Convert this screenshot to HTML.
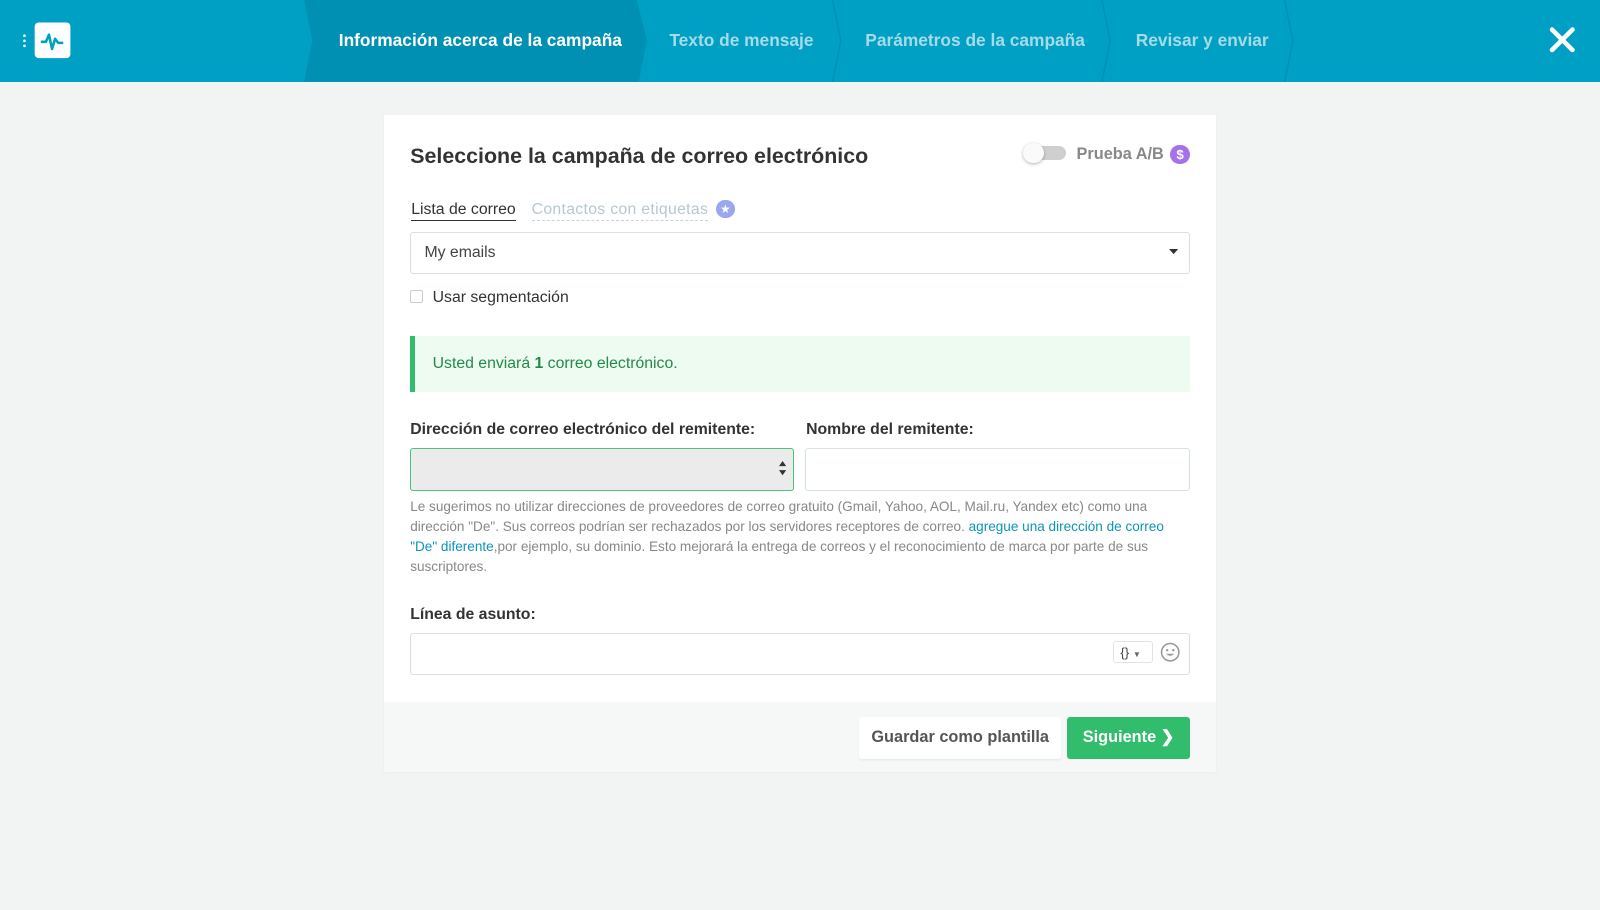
<!DOCTYPE html>
<html><head><meta charset="utf-8"><style>
html,body{margin:0;padding:0;}
body{width:1600px;height:910px;background:#f2f4f4;overflow:hidden;font-family:"Liberation Sans",sans-serif;}
#w{zoom:1.0204;width:1568px;height:892px;position:relative;}
.a{position:absolute;}
.hdr{left:0;top:0;width:1568px;height:80px;background:#00a0c5;}
.tab{top:0;height:80px;line-height:80px;font-size:17px;font-weight:bold;color:#a6dbe8;}
.card{left:376px;top:113px;width:816px;height:644px;background:#fff;box-shadow:0 1px 2px rgba(0,0,0,.05);}
.lbl{font-size:15px;font-weight:bold;color:#333;}
.inp{border:1px solid #d6e2e2;border-radius:3px;background:#fff;}
</style></head><body><div id="w">
<div class="a hdr"></div>
<svg class="a" style="left:0;top:0" width="1568" height="80">
<polygon points="298,0 624,0 634,40 626,80 298,80 306,40" fill="#0090b3"/>
<polyline points="816,0 824,40 816,80" fill="none" stroke="#0090b3" stroke-width="1.5"/>
<polyline points="1080,0 1088,40 1080,80" fill="none" stroke="#0090b3" stroke-width="1.5"/>
<polyline points="1259,0 1267,40 1259,80" fill="none" stroke="#0090b3" stroke-width="1.5"/>
<circle cx="24" cy="35" r="1.3" fill="#fff"/><circle cx="24" cy="40" r="1.3" fill="#fff"/><circle cx="24" cy="45" r="1.3" fill="#fff"/>
<rect x="34" y="22" width="35" height="35" rx="4" fill="#fff"/>
<polyline points="40,41 45,41 48,34 51,48 54,38 57,42 62,42" fill="none" stroke="#00a0c5" stroke-width="2.5" stroke-linejoin="round"/>
<path d="M1521 29 L1541 49 M1541 29 L1521 49" stroke="#fff" stroke-width="4.5" stroke-linecap="round"/>
</svg>
<div class="a tab" style="left:332px;color:#fff">Información acerca de la campaña</div>
<div class="a tab" style="left:656px">Texto de mensaje</div>
<div class="a tab" style="left:848px">Parámetros de la campaña</div>
<div class="a tab" style="left:1113px">Revisar y enviar</div>

<div class="a card"></div>
<div class="a" style="left:376px;top:688px;width:816px;height:69px;background:#f6f8f8"></div>
<div class="a" style="left:402px;top:141px;font-size:21px;font-weight:bold;color:#333">Seleccione la campaña de correo electrónico</div>
<div class="a" style="left:1005px;top:143px;width:40px;height:14px;border-radius:7px;background:#cfcfcf"></div>
<div class="a" style="left:1003px;top:140px;width:20px;height:20px;border-radius:10px;background:#fafafa;box-shadow:0 1px 3px rgba(0,0,0,.3)"></div>
<div class="a" style="left:1055px;top:142px;font-size:16px;font-weight:bold;color:#888">Prueba A/B</div>
<div class="a" style="left:1147px;top:142px;width:19px;height:19px;border-radius:10px;background:#a571e8;color:#fff;font-size:13px;font-weight:bold;text-align:center;line-height:19px">$</div>

<div class="a" style="left:403px;top:197px;font-size:15.5px;color:#333;border-bottom:1px solid #333;padding-bottom:1px">Lista de correo</div>
<div class="a" style="left:521px;top:197px;font-size:15.5px;color:#b8c8d0;border-bottom:1px dashed #c8d4da;padding-bottom:1px;letter-spacing:0.3px">Contactos con etiquetas</div>
<div class="a" style="left:702px;top:196px;width:18px;height:18px;border-radius:9px;background:#9aa6f0;color:#fff;font-size:12px;text-align:center;line-height:18px">★</div>

<div class="a inp" style="left:402px;top:227px;width:762px;height:40px"></div>
<div class="a" style="left:416px;top:239px;font-size:15.5px;color:#444">My emails</div>
<svg class="a" style="left:1146px;top:244px" width="10" height="6"><polygon points="0,0 9,0 4.5,5" fill="#333"/></svg>

<div class="a" style="left:402px;top:284px;width:11px;height:11px;border:1px solid #ccc;border-radius:2px;background:#fff"></div>
<div class="a" style="left:424px;top:283px;font-size:15.5px;color:#333">Usar segmentación</div>

<div class="a" style="left:402px;top:329px;width:764px;height:55px;background:#edfbf1;border-left:5px solid #31bd6c;box-sizing:border-box"></div>
<div class="a" style="left:424px;top:348px;font-size:15.5px;color:#238a4c">Usted enviará <b>1</b> correo electrónico.</div>

<div class="a lbl" style="left:402px;top:413px;font-size:15.5px">Dirección de correo electrónico del remitente:</div>
<div class="a lbl" style="left:790px;top:413px;font-size:15.5px">Nombre del remitente:</div>
<div class="a" style="left:402px;top:439px;width:374px;height:40px;background:#ebebeb;border:1px solid #4cc37b;border-radius:3px"></div>
<svg class="a" style="left:762px;top:452px" width="9" height="14"><polygon points="1,5 8,5 4.5,0" fill="#333"/><polygon points="1,9 8,9 4.5,14" fill="#333"/></svg>
<div class="a inp" style="left:789px;top:439px;width:375px;height:40px"></div>

<div class="a" style="left:402px;top:487px;width:745px;font-size:13.3px;line-height:19.7px;color:#888">Le sugerimos no utilizar direcciones de proveedores de correo gratuito (Gmail, Yahoo, AOL, Mail.ru, Yandex etc) como una dirección "De". Sus correos podrían ser rechazados por los servidores receptores de correo. <span style="color:#0d94b8">agregue una dirección de correo "De" diferente</span>,por ejemplo, su dominio. Esto mejorará la entrega de correos y el reconocimiento de marca por parte de sus suscriptores.</div>

<div class="a lbl" style="left:402px;top:594px;font-size:15.5px">Línea de asunto:</div>
<div class="a inp" style="left:402px;top:620px;width:762px;height:40px"></div>
<div class="a" style="left:1091px;top:628px;width:39px;height:22px;border:1px solid #dde6e6;border-radius:3px;font-size:13px;color:#444;line-height:22px;padding-left:6px;box-sizing:border-box">{}&nbsp;<span style="font-size:8px;color:#666">▼</span></div>
<svg class="a" style="left:1137px;top:629px" width="20" height="20"><circle cx="10" cy="10" r="8.5" fill="none" stroke="#999" stroke-width="1.5"/><circle cx="7" cy="8" r="1.2" fill="#999"/><circle cx="13" cy="8" r="1.2" fill="#999"/><path d="M6 11.5 Q10 15.5 14 11.5 Z" fill="#999"/></svg>

<div class="a" style="left:842px;top:703px;width:198px;height:41px;background:#fff;border-radius:3px;box-shadow:0 1px 2px rgba(0,0,0,.06);font-size:16px;font-weight:bold;color:#555;text-align:center;line-height:41px">Guardar como plantilla</div>
<div class="a" style="left:1046px;top:703px;width:120px;height:41px;background:#31bd6c;border-radius:3px;font-size:16px;font-weight:bold;color:#fff;text-align:center;line-height:41px">Siguiente ❯</div>
</div></body></html>
